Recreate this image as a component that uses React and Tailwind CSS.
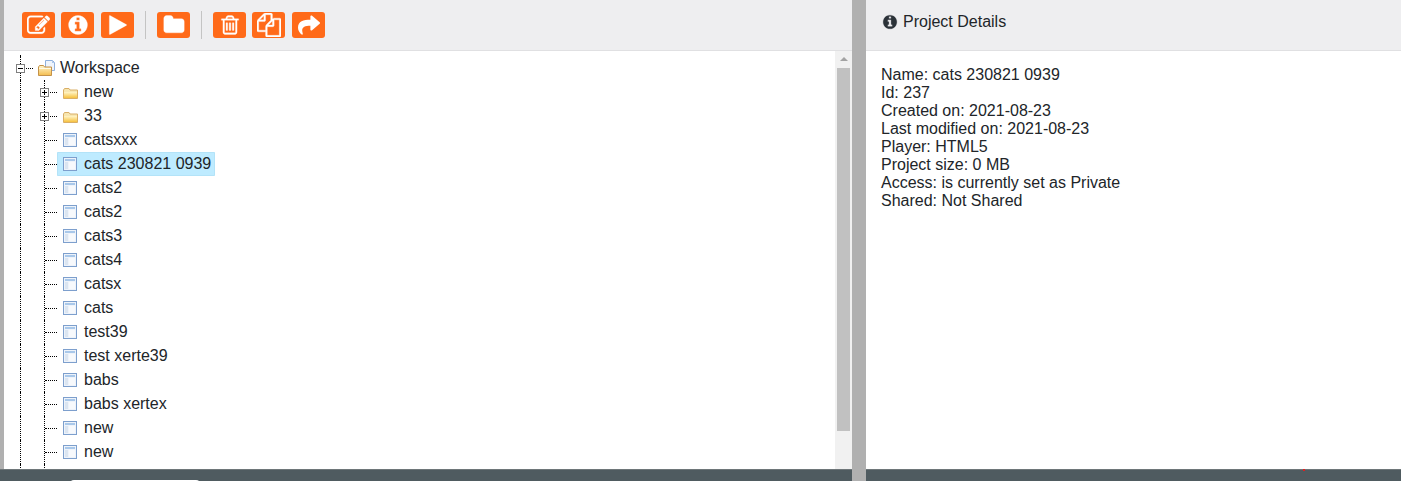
import React from "react";
import { FaShare } from "react-icons/fa";

// Font Awesome 4 glyphs, the react-icons set only has the newer shapes
const fa4 = {
  edit: "M888 1184l116-116-152-152-116 116v56h96v96h56zm440-720q-16-16-33 1l-350 350q-17 17-1 33t33-1l350-350q17-17 1-33zm80 594v190q0 119-84.5 203.5t-203.5 84.5h-832q-119 0-203.5-84.5t-84.5-203.5v-832q0-119 84.5-203.5t203.5-84.5h832q63 0 117 25 15 7 18 23 3 17-9 29l-49 49q-14 14-32 8-23-6-45-6h-832q-66 0-113 47t-47 113v832q0 66 47 113t113 47h832q66 0 113-47t47-113v-126q0-13 9-22l64-64q15-15 35-7t20 29zm-96-738l288 288-672 672h-288v-288zm444 132l-92 92-288-288 92-92q28-28 68-28t68 28l152 152q28 28 28 68t-28 68z",
  info: "M1152 1376v-160q0-14-9-23t-23-9h-96v-512q0-14-9-23t-23-9h-320q-14 0-23 9t-9 23v160q0 14 9 23t23 9h96v320h-96q-14 0-23 9t-9 23v160q0 14 9 23t23 9h448q14 0 23-9t9-23zm-128-896v-160q0-14-9-23t-23-9h-192q-14 0-23 9t-9 23v160q0 14 9 23t23 9h192q14 0 23-9t9-23zm640 416q0 209-103 385.5t-279.5 279.5-385.5 103-385.5-103-279.5-279.5-103-385.5 103-385.5 279.5-279.5 385.5-103 385.5 103 279.5 279.5 103 385.5z",
  play: "M1576 927l-1328 738q-23 13-39.5 3t-16.5-36v-1472q0-26 16.5-36t39.5 3l1328 738q23 13 23 31t-23 31z",
  folder: "M1728 608v704q0 92-66 158t-158 66h-1216q-92 0-158-66t-66-158v-960q0-92 66-158t158-66h320q92 0 158 66t66 158v32h672q92 0 158 66t66 158z",
  trash: "M704 736v576q0 14-9 23t-23 9h-64q-14 0-23-9t-9-23v-576q0-14 9-23t23-9h64q14 0 23 9t9 23zm256 0v576q0 14-9 23t-23 9h-64q-14 0-23-9t-9-23v-576q0-14 9-23t23-9h64q14 0 23 9t9 23zm256 0v576q0 14-9 23t-23 9h-64q-14 0-23-9t-9-23v-576q0-14 9-23t23-9h64q14 0 23 9t9 23zm128 724v-948h-896v948q0 22 7 40.5t14.5 27 10.5 8.5h832q3 0 10.5-8.5t14.5-27 7-40.5zm-672-1076h448l-48-117q-7-9-17-11h-317q-10 2-17 11zm928 32v64q0 14-9 23t-23 9h-96v948q0 83-47 143.5t-113 60.5h-832q-66 0-113-58.5t-47-141.5v-952h-96q-14 0-23-9t-9-23v-64q0-14 9-23t23-9h309l70-167q15-37 54-63t79-26h320q40 0 79 26t54 63l70 167h309q14 0 23 9t9 23z",
  files: "M1696 384q40 0 68 28t28 68v1216q0 40-28 68t-68 28h-960q-40 0-68-28t-28-68v-288h-544q-40 0-68-28t-28-68v-672q0-40 20-88t48-76l408-408q28-28 76-48t88-20h416q40 0 68 28t28 68v328q68-40 128-40h416zm-544 213l-299 299h299v-299zm-640-384l-299 299h299v-299zm196 647l316-316v-416h-384v416q0 40-28 68t-68 28h-416v640h512v-256q0-40 20-88t48-76zm956 804v-1152h-384v416q0 40-28 68t-68 28h-416v640h896z",
};

function Fa({ name, size = 22, className = "" }) {
  return (
    <svg width={size} height={size} viewBox="0 0 1792 1792" fill="currentColor" stroke="currentColor" strokeWidth="24" className={"shrink-0 " + className}>
      <path d={fa4[name]} />
    </svg>
  );
}

function ToolBtn({ children, className = "" }) {
  return (
    <button className={"flex h-[26px] w-[33px] items-center justify-center rounded-[3px] bg-[#ff6a19] text-white " + className}>
      {children}
    </button>
  );
}

function Divider() {
  return <div className="mx-[11px] h-[28px] w-px bg-[#c4c4c4]" />;
}

function FolderIcon() {
  return (
    <svg width="15" height="13" viewBox="0 0 15 13" className="mt-[2px] shrink-0">
      <defs>
        <linearGradient id="fold" x1="0" y1="0" x2="0" y2="1">
          <stop offset="0" stopColor="#fff5c8" />
          <stop offset="1" stopColor="#f6c13f" />
        </linearGradient>
      </defs>
      <path d="M0.5 3 L1.5 1.5 H6 L7 3 H14.5 V11.5 H0.5 Z" fill="#f7e6b0" stroke="#d9ae66" />
      <path d="M1 5 H14 V11 H1 Z" fill="url(#fold)" />
    </svg>
  );
}

function WorkspaceIcon() {
  return (
    <svg width="18" height="18" viewBox="0 0 18 18" className="shrink-0">
      <defs>
        <linearGradient id="wsf" x1="0" y1="0" x2="0" y2="1">
          <stop offset="0" stopColor="#fff6cf" />
          <stop offset="1" stopColor="#f4bd4e" />
        </linearGradient>
      </defs>
      <path d="M7.5 1.5 H14.5 L16.5 3.5 V11.5 H7.5 Z" fill="#eef4fc" stroke="#8fb0dc" />
      <path d="M14 1.5 V4 H16.5 Z" fill="#a9c6ec" />
      <path d="M0.5 8 L1.5 6.5 H5.5 L6.5 8 H13.5 V16.5 H0.5 Z" fill="url(#wsf)" stroke="#c4924a" />
      <path d="M1 9 H13 V10 H1 Z" fill="#fffbe6" />
    </svg>
  );
}

function PageIcon() {
  return (
    <svg width="14" height="14" viewBox="0 0 14 14" className="shrink-0">
      <rect x="0.5" y="0.5" width="13" height="13" fill="#eef3fa" stroke="#7d9fcd" />
      <rect x="2" y="2" width="10" height="2" fill="#a9c8ea" />
      <rect x="2" y="5" width="3" height="7" fill="#dbe5f1" />
      <rect x="6" y="5" width="6" height="7" fill="#f7f9fc" />
    </svg>
  );
}

function Toggle({ minus }) {
  return (
    <span className="relative flex h-[9px] w-[9px] shrink-0 items-center justify-center border border-[#808080] bg-white">
      <span className="h-px w-[5px] bg-black" />
      {!minus && <span className="absolute h-[5px] w-px bg-black" />}
    </span>
  );
}

const pages = ["catsxxx", "cats 230821 0939", "cats2", "cats2", "cats3", "cats4", "catsx", "cats", "test39", "test xerte39", "babs", "babs xertex", "new", "new"];

function TreeRow({ label, folder, selected }) {
  return (
    <div className="ml-[16px] flex h-6 border-l border-dotted border-black">
      <div className="ml-[23px] flex border-l border-dotted border-black">
        <div className="relative flex w-[12px] items-center">
          <div className="w-full border-t border-dotted border-black" />
          {folder && <div className="absolute left-[-5px]"><Toggle /></div>}
        </div>
        <div className={"flex h-6 items-center pl-[6px] pr-1 " + (selected ? "rounded-[1px] bg-[#beebff] outline outline-[#b3e3f8] -outline-offset-1" : "")}>
          {folder ? <FolderIcon /> : <PageIcon />}
          <span className={folder ? "ml-[6px]" : "ml-[7px]"}>{label}</span>
        </div>
      </div>
    </div>
  );
}

const details = [
  "Name: cats 230821 0939",
  "Id: 237",
  "Created on: 2021-08-23",
  "Last modified on: 2021-08-23",
  "Player: HTML5",
  "Project size: 0 MB",
  "Access: is currently set as Private",
  "Shared: Not Shared",
];

export default function App() {
  return (
    <div className="flex h-[481px] w-[1401px] overflow-hidden bg-white font-['Liberation_Sans',sans-serif] text-base text-[#212529]">
      {/* left pane */}
      <div className="flex w-[852px] flex-col">
        <div className="flex min-h-0 flex-1">
          <div className="w-1 bg-[#b0b0b0]" />
          <div className="flex min-w-0 flex-1 flex-col">
            <div className="flex h-[51px] shrink-0 items-center border-b border-[#e0e0e2] bg-[#eeeef0] pl-[18px]">
              <ToolBtn><Fa name="edit" size={23} /></ToolBtn>
              <ToolBtn className="ml-[6px]"><Fa name="info" /></ToolBtn>
              <ToolBtn className="ml-[7px]"><Fa name="play" /></ToolBtn>
              <Divider />
              <ToolBtn><Fa name="folder" /></ToolBtn>
              <Divider />
              <ToolBtn><Fa name="trash" /></ToolBtn>
              <ToolBtn className="ml-[6px]"><Fa name="files" size={24} /></ToolBtn>
              <ToolBtn className="ml-[7px]"><FaShare size={22} /></ToolBtn>
            </div>
            <div className="flex min-h-0 flex-1">
              {/* tree */}
              <div className="min-w-0 flex-1 overflow-hidden pt-1">
                <div className="ml-[16px] h-px border-l border-dotted border-black" />
                <div className="ml-[16px] flex h-6 items-center border-l border-dotted border-black">
                  <div className="relative flex w-[12px] items-center">
                    <div className="w-full border-t border-dotted border-black" />
                    <div className="absolute left-[-5px]"><Toggle minus /></div>
                  </div>
                  <div className="ml-[5px] flex items-center">
                    <WorkspaceIcon />
                    <span className="ml-1">Workspace</span>
                  </div>
                </div>
                <TreeRow label="new" folder />
                <TreeRow label="33" folder />
                {pages.map((p, i) => (
                  <TreeRow key={i} label={p} selected={i === 1} />
                ))}
                <div className="ml-[16px] h-6 border-l border-dotted border-black">
                  <div className="ml-[23px] h-6 border-l border-dotted border-black" />
                </div>
              </div>
              {/* scrollbar */}
              <div className="flex w-[17px] shrink-0 flex-col items-center bg-[#f1f1f1]">
                <div className="mt-[6px] h-0 w-0 border-x-[4px] border-b-[4px] border-x-transparent border-b-[#a3a3a3]" />
                <div className="mt-[7px] h-[363px] w-[13px] bg-[#c1c1c1]" />
              </div>
            </div>
          </div>
        </div>
        <div className="h-3 shrink-0 border-t border-[#6e7679] bg-[#4f5b60]">
          <div className="ml-[70px] mt-[10px] h-1 w-[130px] rounded-t bg-white" />
        </div>
      </div>

      {/* splitter */}
      <div className="w-[14px] shrink-0 bg-[#b0b0b0]" />

      {/* right pane */}
      <div className="flex min-w-0 flex-1 flex-col">
        <div className="flex h-[51px] shrink-0 items-center border-b border-[#e0e0e2] bg-[#eeeef0] pb-[6px] pl-4">
          <Fa name="info" size={16} className="text-[#2b3238]" />
          <span className="ml-[5px]">Project Details</span>
        </div>
        <div className="flex-1 pl-[15px] pt-[15px] leading-[18px]">
          {details.map((d) => (
            <div key={d}>{d}</div>
          ))}
        </div>
        <div className="flex h-3 shrink-0 border-t border-[#6e7679] bg-[#4f5b60]">
          <div className="ml-[437px] -mt-px h-[2px] w-[2px] bg-[#e02020]" />
        </div>
      </div>
    </div>
  );
}
